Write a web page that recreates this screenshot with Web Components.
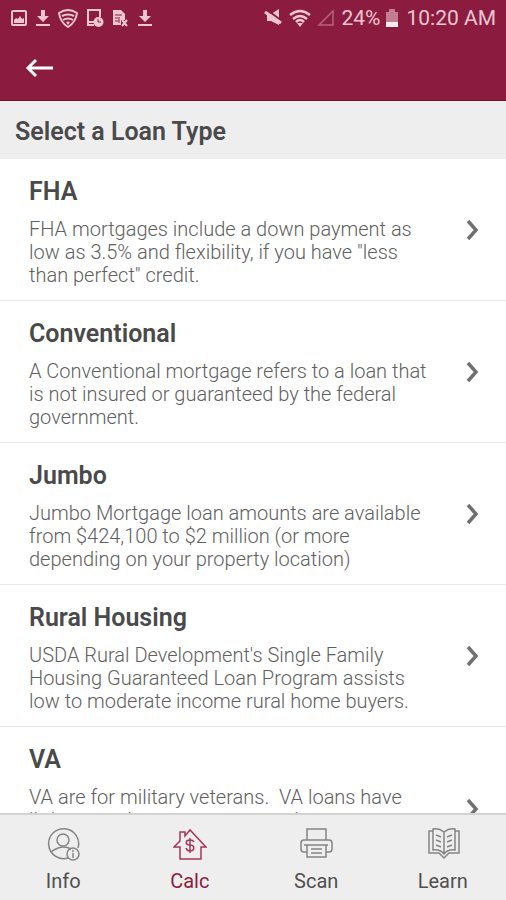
<!DOCTYPE html>
<html lang="en">
<head>
<meta charset="utf-8">
<meta name="viewport" content="width=device-width, initial-scale=1">
<title>Select a Loan Type</title>
<style>
    html, body {
        height: 100%;
        margin: 0;
    }
    body {
        font-family: Roboto, "Liberation Sans", sans-serif;
        --brand: #8c1c3f;
        --bar: #eeeeee;
        --ink: #4a4a4a;
        --muted: #606060;
    }
</style>
</head>
<body>
<loan-app>
    <status-bar slot="header" battery="24%" time="10:20 AM"></status-bar>
    <app-toolbar slot="header"></app-toolbar>
    <section-title slot="title">Select a Loan Type</section-title>
    <loan-item name="FHA">FHA mortgages include a down payment as low as 3.5% and flexibility, if you have "less than perfect" credit.</loan-item>
    <loan-item name="Conventional">A Conventional mortgage refers to a loan that is not insured or guaranteed by the federal government.</loan-item>
    <loan-item name="Jumbo">Jumbo Mortgage loan amounts are available from $424,100 to $2 million (or more depending on your property location)</loan-item>
    <loan-item name="Rural Housing">USDA Rural Development's Single Family Housing Guaranteed Loan Program assists low to moderate income rural home buyers.</loan-item>
    <loan-item name="VA">VA are for military veterans.&nbsp; VA loans have little or no down payment requirements.<br><br><br></loan-item>
    <tab-bar slot="footer">
        <tab-item icon="info">Info</tab-item>
        <tab-item icon="calc" active>Calc</tab-item>
        <tab-item icon="scan">Scan</tab-item>
        <tab-item icon="learn">Learn</tab-item>
    </tab-bar>
</loan-app>

<script>
class LoanApp extends HTMLElement {
    constructor() {
        super();
        this.attachShadow({ mode: "open" });
        this.shadowRoot.innerHTML = `
            <style>
                :host {
                    display: flex;
                    flex-direction: column;
                    height: 100%;
                    background: #fff;
                }
                header {
                    flex: none;
                    background: var(--brand);
                }
                main {
                    flex: 1;
                    min-height: 0;
                    overflow-y: auto;
                    scrollbar-width: none;
                }
            </style>
            <header><slot name="header"></slot></header>
            <slot name="title"></slot>
            <main><slot></slot></main>
            <slot name="footer"></slot>
        `;
    }
}

class StatusBar extends HTMLElement {
    constructor() {
        super();
        this.attachShadow({ mode: "open" });
        const download = `
            <svg width="14" height="18" viewBox="0 0 14 18">
                <path d="M5 1h4v6h4l-6 6-6-6h4z" fill="currentColor"/>
                <path d="M0 16h14" stroke="currentColor" stroke-width="2"/>
            </svg>`;
        this.shadowRoot.innerHTML = `
            <style>
                :host {
                    display: flex;
                    align-items: center;
                    justify-content: space-between;
                    height: 36px;
                    padding: 0 10px;
                    color: #ecc6d2;
                    font-size: 21px;
                }
                div {
                    display: flex;
                    align-items: center;
                    gap: 8px;
                }
                .right { gap: 6px; }
                .time { margin-left: 2px; }
                svg { display: block; fill: none; }
            </style>
            <div>
                <!-- Picture -->
                <svg width="18" height="18" viewBox="0 0 18 18">
                    <rect x="2" y="2" width="14" height="14" rx="1" stroke="currentColor" stroke-width="2"/>
                    <path d="M4 14v-3l2-2 2 1 2-3 2 3 2-1v5z" fill="currentColor"/>
                </svg>
                ${download}
                <!-- Wi-Fi shield -->
                <svg width="20" height="20" viewBox="0 0 20 20" stroke="currentColor" stroke-width="2">
                    <path d="M1 5q9-6 18 0-1 9-9 14Q2 14 1 5z"/>
                    <path d="M4 8q6-3 12 0M5 12q5-3 10 0"/>
                    <path d="M8 14q2-1 4 0l-2 3z" fill="currentColor" stroke="none"/>
                </svg>
                <!-- Device with clock -->
                <svg width="18" height="18" viewBox="0 0 18 18">
                    <path d="M8 16H2V1h12v7M2 13h7" stroke="currentColor" stroke-width="2"/>
                    <circle cx="12.500" cy="13" r="5" fill="currentColor"/>
                    <path d="M12 10v3h3" stroke="#8c1c3f" stroke-width="1"/>
                </svg>
                <!-- SIM card with cross -->
                <svg width="18" height="18" viewBox="0 0 18 18">
                    <path d="M1 1h8l4 4v6H9v5H1z" fill="currentColor"/>
                    <path d="M3 6h7M3 9h3M3 12h3M7 8v6" stroke="#8c1c3f"/>
                    <path d="M10 11l5 6M15 11l-5 6" stroke="currentColor" stroke-width="2"/>
                </svg>
                ${download}
            </div>
            <div class="right">
                <!-- Muted speaker -->
                <svg width="20" height="18" viewBox="0 0 20 18">
                    <path d="M4 5h4l8-5v16l-8-4H4z" fill="currentColor"/>
                    <path d="M3 0l17 13" stroke="#8c1c3f" stroke-width="2"/>
                    <path d="M2 3l16 11" stroke="currentColor" stroke-width="3"/>
                </svg>
                <svg width="22" height="18" viewBox="0 0 22 18" stroke="currentColor" stroke-width="2.500">
                    <path d="M1 6q10-8 20 0M4 10q7-6 14 0M7 13q4-4 8 0"/>
                    <path d="M8 14h6l-3 4z" fill="currentColor" stroke="none"/>
                </svg>
                <svg width="18" height="18" viewBox="0 0 18 18">
                    <path d="M2 16L16 2v14z" stroke="#b5637e" stroke-width="1.500"/>
                </svg>
                <span class="battery"></span>
                <svg width="12" height="18" viewBox="0 0 12 18">
                    <path d="M0 3h3V0h6v3h3v10H0z" fill="#c27d94"/>
                    <path d="M0 13h12v5H0z" fill="#fbeaf0"/>
                </svg>
                <span class="time"></span>
            </div>
        `;
    }

    connectedCallback() {
        this.shadowRoot.querySelector(".battery").textContent = this.getAttribute("battery");
        this.shadowRoot.querySelector(".time").textContent = this.getAttribute("time");
    }
}

class AppToolbar extends HTMLElement {
    constructor() {
        super();
        this.attachShadow({ mode: "open" });
        this.shadowRoot.innerHTML = `
            <style>
                :host {
                    display: flex;
                    align-items: center;
                    height: 64px;
                    padding: 0 16px;
                    border-bottom: 1px solid #7a0c30;
                }
                button {
                    padding: 8px;
                    border: 0;
                    background: none;
                    color: #fff;
                }
                svg { display: block; }
            </style>
            <button type="button" aria-label="Back">
                <svg width="32" height="20" viewBox="0 0 32 20" fill="none" stroke="currentColor" stroke-width="3">
                    <path d="M29 10H5M12 2l-8 8 8 8"/>
                </svg>
            </button>
        `;
    }
}

class SectionTitle extends HTMLElement {
    constructor() {
        super();
        this.attachShadow({ mode: "open" });
        this.shadowRoot.innerHTML = `
            <style>
                :host {
                    display: block;
                    flex: none;
                    padding: 16px 15px 12px;
                    background: var(--bar);
                    color: var(--ink);
                }
                h1 {
                    margin: 0;
                    font-size: 25px;
                    line-height: 30px;
                    font-weight: 600;
                }
            </style>
            <h1><slot></slot></h1>
        `;
    }
}

class LoanItem extends HTMLElement {
    constructor() {
        super();
        this.attachShadow({ mode: "open" });
        this.shadowRoot.innerHTML = `
            <style>
                :host {
                    display: block;
                    border-bottom: 1px solid #e8e8e8;
                }
                button {
                    display: flex;
                    align-items: center;
                    width: 100%;
                    padding: 0 26px 0 29px;
                    border: 0;
                    background: none;
                    font: inherit;
                    text-align: left;
                }
                .text {
                    flex: 1;
                    padding: 17px 32px 13px 0;
                }
                .name {
                    display: block;
                    margin-bottom: 10px;
                    color: var(--ink);
                    font-size: 25px;
                    line-height: 32px;
                    font-weight: 600;
                }
                .about {
                    display: block;
                    color: var(--muted);
                    font-size: 20px;
                    line-height: 23px;
                    font-weight: 300;
                }
                svg { flex: none; color: #707070; }
            </style>
            <button type="button">
                <span class="text">
                    <span class="name"></span>
                    <span class="about"><slot></slot></span>
                </span>
                <svg width="14" height="22" viewBox="0 0 14 22" fill="none" stroke="currentColor" stroke-width="3.500">
                    <path d="M2 2l8 9-8 9"/>
                </svg>
            </button>
        `;
    }

    connectedCallback() {
        this.shadowRoot.querySelector(".name").textContent = this.getAttribute("name");
    }
}

class TabBar extends HTMLElement {
    constructor() {
        super();
        this.attachShadow({ mode: "open" });
        this.shadowRoot.innerHTML = `
            <style>
                :host {
                    display: block;
                    flex: none;
                    border-top: 2px solid #d2d2d2;
                    background: var(--bar);
                }
                nav { display: flex; }
            </style>
            <nav><slot></slot></nav>
        `;
    }
}

const tabIcons = {
    info: `
        <path d="M22 31A15 15 0 1 1 32 21"/>
        <circle cx="17" cy="13" r="6"/>
        <path d="M5 25q11-8 20-3"/>
        <circle cx="27" cy="27" r="6"/>
        <path d="M27 26v5M27 23v2"/>`,
    calc: `
        <path d="M7 20H1l6-6V5h5v4l5-6 16 17h-5v12H7z"/>
        <path d="M21 15q-1-2-4-2c-5 0-5 5 0 5s5 6 0 6q-3 0-4-3M17 11v15"/>`,
    scan: `
        <path d="M8 13V2h19v11"/>
        <path d="M8 25H5q-3 0-3-3v-6q0-3 3-3h25q3 0 3 3v6q0 3-3 3h-3"/>
        <path d="M5 18h24M8 18h19v12H8zM12 22h11M12 26h11"/>`,
    learn: `
        <path d="M18 5q-5-4-11-3v21q7-1 11 4 4-5 11-4V2Q23 1 18 5zv22"/>
        <path d="M7 4H3v22h10l5 5 5-5h10V4h-4"/>
        <path d="M10 8l5 2M10 13l5 2M10 18l5 2M26 8l-5 2M26 13l-5 2M26 18l-5 2"/>`
};

class TabItem extends HTMLElement {
    constructor() {
        super();
        this.attachShadow({ mode: "open" });
        this.shadowRoot.innerHTML = `
            <style>
                :host { flex: 1; }
                button {
                    display: flex;
                    flex-direction: column;
                    align-items: center;
                    gap: 8px;
                    width: 100%;
                    padding: 12px 0 7px;
                    border: 0;
                    background: none;
                    color: #505050;
                    font: inherit;
                    font-size: 20px;
                    line-height: 24px;
                }
                svg { color: #858585; }
                :host([active]) button { color: var(--brand); }
                :host([active]) svg { color: #a5375a; }
            </style>
            <button type="button">
                <svg width="34" height="34" viewBox="0 0 34 34" fill="none" stroke="currentColor" stroke-width="1.500"></svg>
                <span><slot></slot></span>
            </button>
        `;
    }

    connectedCallback() {
        this.shadowRoot.querySelector("svg").innerHTML = tabIcons[this.getAttribute("icon")];
    }
}

customElements.define("loan-app", LoanApp);
customElements.define("status-bar", StatusBar);
customElements.define("app-toolbar", AppToolbar);
customElements.define("section-title", SectionTitle);
customElements.define("loan-item", LoanItem);
customElements.define("tab-bar", TabBar);
customElements.define("tab-item", TabItem);
</script>
</body>
</html>
